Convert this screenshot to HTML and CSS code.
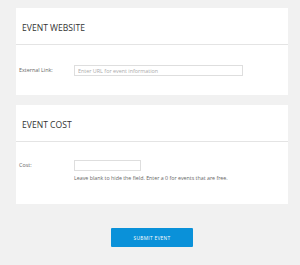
FILE: index.html
```html
<!DOCTYPE html>
<html lang="en">
<head>
    <meta charset="UTF-8">
    <meta name="viewport" content="width=device-width, initial-scale=1.0">
    <title>Submit Event</title>
    <link rel="stylesheet" href="styles.css">
</head>
<body>
    <div class="page">
        <div class="card">
            <div class="card-head">
                <h2>Event Website</h2>
            </div>
            <div class="card-body">
                <div class="row">
                    <label for="url">External Link:</label>
                    <input type="text" id="url" class="input-wide" placeholder="Enter URL for event information">
                </div>
            </div>
        </div>
        <div class="card">
            <div class="card-head">
                <h2>Event Cost</h2>
            </div>
            <div class="card-body cost">
                <div class="row">
                    <label for="cost">Cost:</label>
                    <div>
                        <input type="text" id="cost" class="input-small">
                        <p class="help">Leave blank to hide the field. Enter a 0 for events that are free.</p>
                    </div>
                </div>
            </div>
        </div>
        <div class="actions">
            <button type="submit">Submit Event</button>
        </div>
    </div>
</body>
</html>
```

FILE: styles.css
```css
body {
    font-family: "Open Sans", Arial, sans-serif;
    background-color: #f1f1f1;
    margin: 0;
    padding: 0;
}
.page {
    padding: 8px 12px 0 16px;
}
.card {
    background: #fff;
    margin-bottom: 10px;
}
.card-head {
    height: 37px;
    box-sizing: border-box;
    border-bottom: 1px solid #e4e4e4;
    display: flex;
    align-items: center;
    padding: 3px 0 0 6px;
}
.card-head h2 {
    margin: 0;
    font-size: 8.6px;
    font-weight: 400;
    text-transform: uppercase;
    color: #333;
}
.card-body {
    padding: 20px 0 19px 3px;
}
.card-body.cost {
    padding: 18px 0 22px 3px;
}
.row {
    display: grid;
    grid-template-columns: 55px 1fr;
    align-items: start;
}
.row label {
    font-size: 5.4px;
    color: #666;
    line-height: 11px;
}
.row input {
    box-sizing: border-box;
    height: 11px;
    border: 1px solid #dedede;
    padding: 0 3px;
    margin: 0;
    font-family: inherit;
    font-size: 5.4px;
    display: block;
}
.row input::placeholder {
    color: #aaa;
}
.input-wide {
    width: 169px;
}
.input-small {
    width: 67px;
}
.help {
    margin: 3px 0 0;
    font-size: 5.3px;
    color: #666;
    line-height: 8px;
}
.actions {
    display: flex;
    justify-content: center;
    padding-top: 14px;
}
.actions button {
    width: 82px;
    height: 19px;
    background: #0a91d9;
    color: #fff;
    border: none;
    border-radius: 1px;
    font-family: inherit;
    font-size: 4.8px;
    letter-spacing: 0.3px;
    text-transform: uppercase;
    padding: 0;
    cursor: pointer;
}
```
